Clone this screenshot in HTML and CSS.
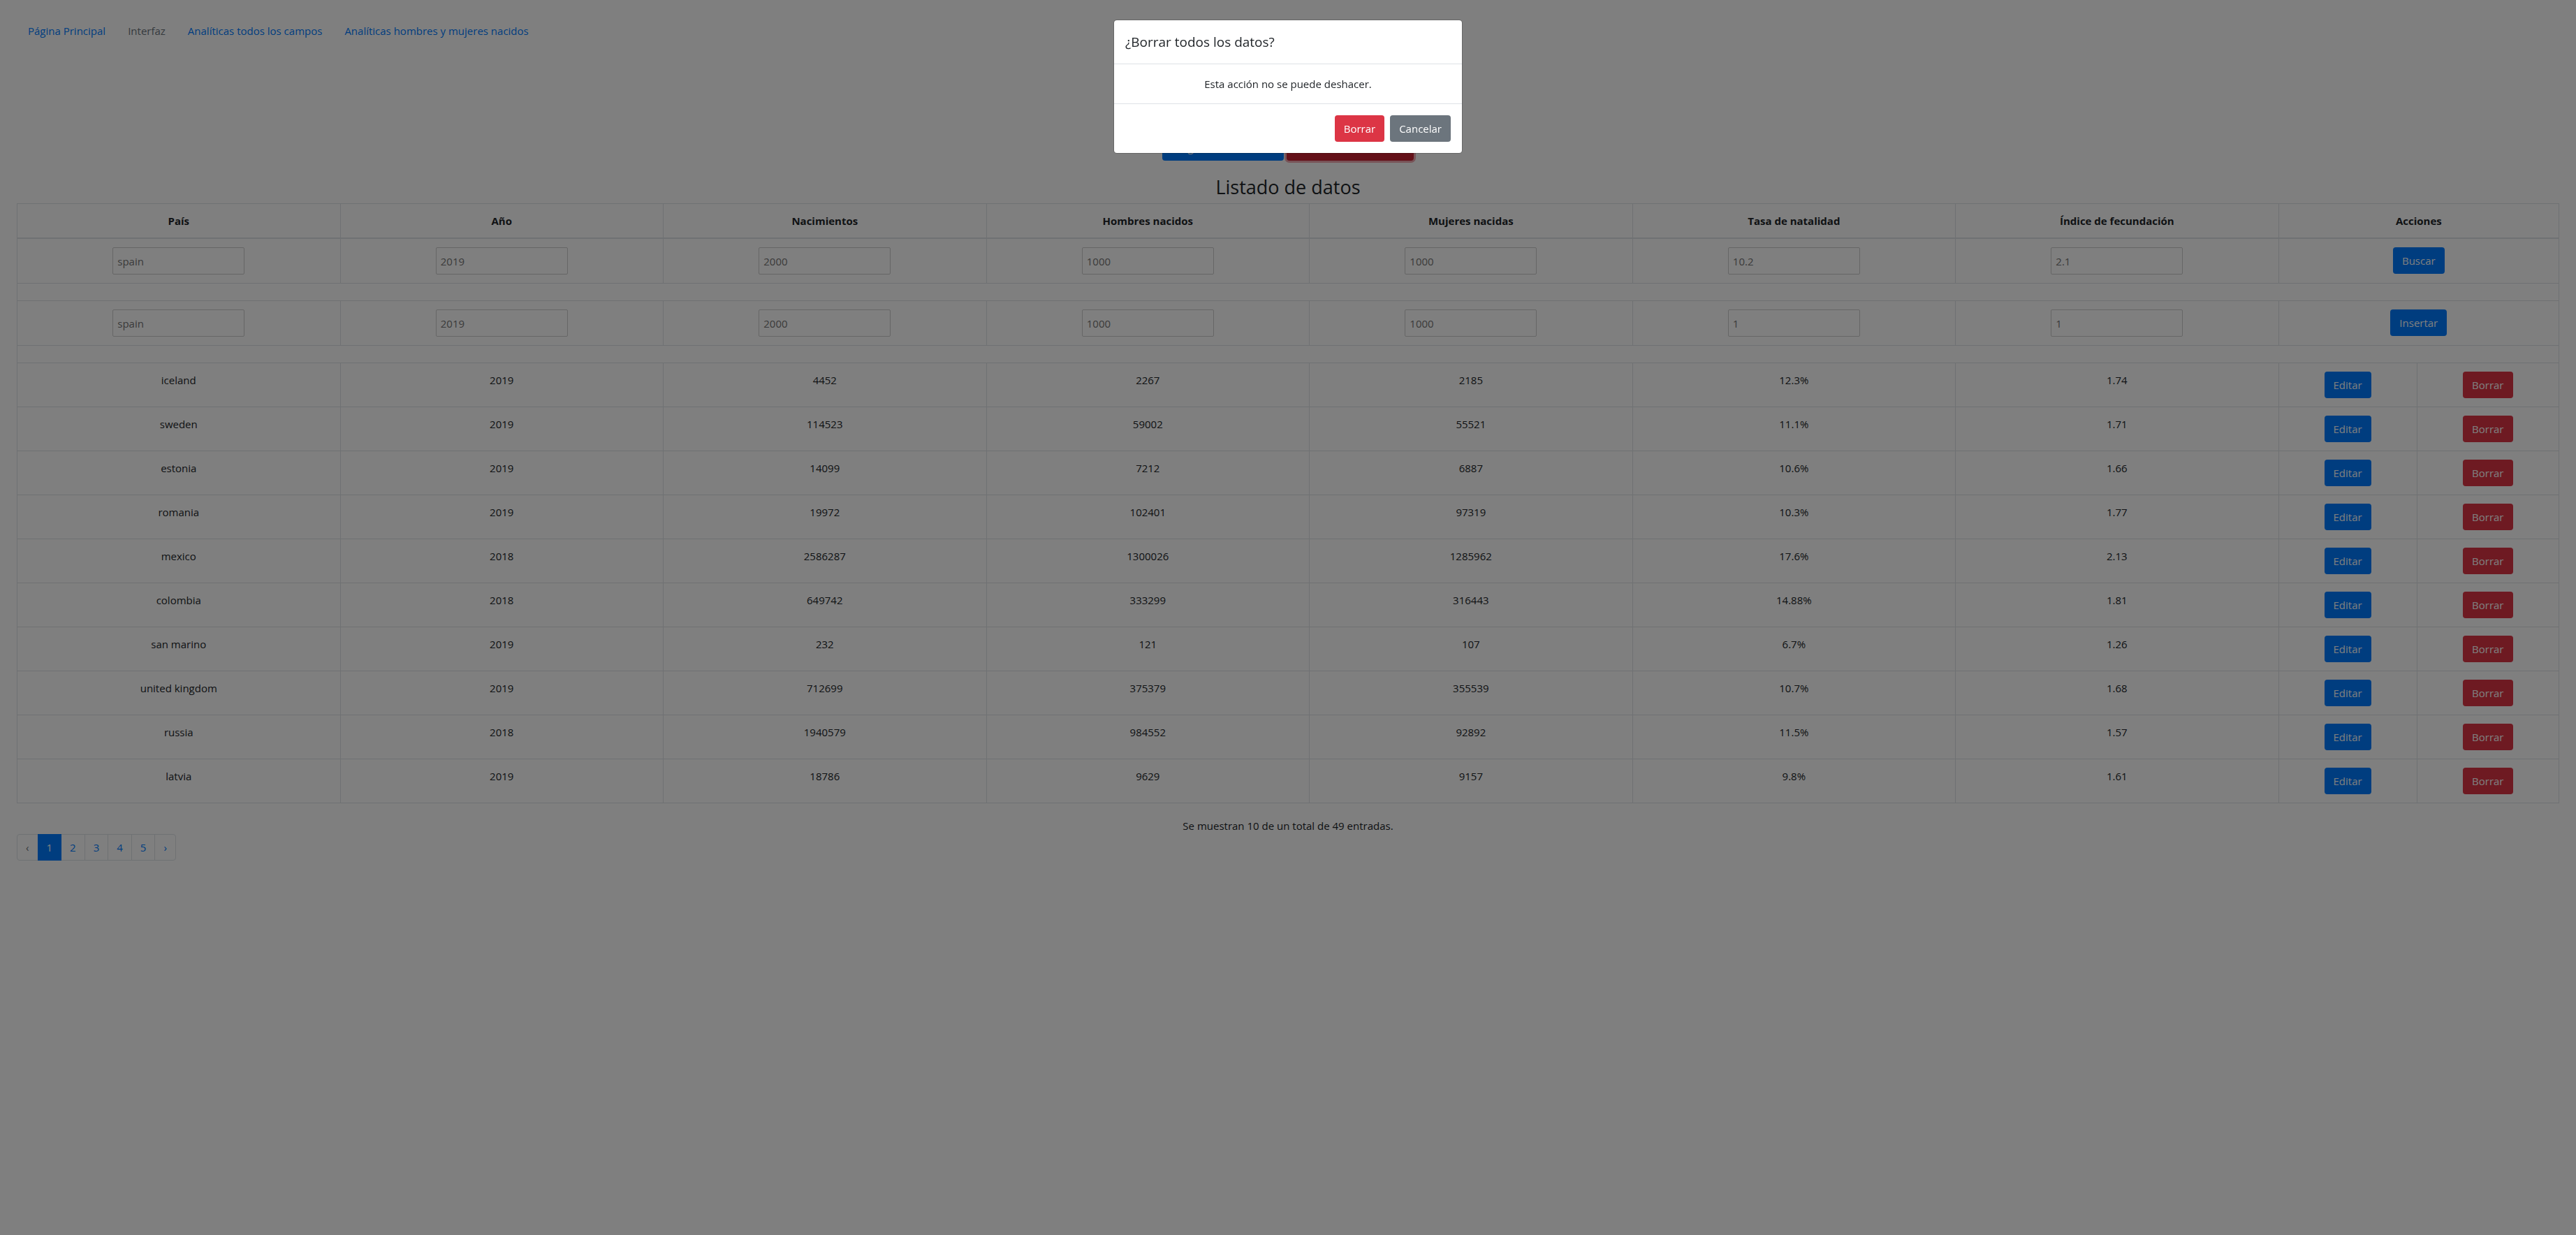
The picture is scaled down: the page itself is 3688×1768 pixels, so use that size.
FILE: index.html
```html
<!DOCTYPE html>
<html lang="es">
<head>
<meta charset="utf-8">
<title>Listado de datos</title>
<link rel="stylesheet" href="styles.css">
</head>
<body>
<main class="page">
  <nav class="nav">
    <a class="nav-link" href="#inicio">Página Principal</a>
    <a class="nav-link disabled" href="#interfaz">Interfaz</a>
    <a class="nav-link" href="#campos">Analíticas todos los campos</a>
    <a class="nav-link" href="#nacidos">Analíticas hombres y mujeres nacidos</a>
  </nav>
  <div class="toolbar">
    <button class="btn primary" type="button">Cargar datos iniciales</button>
    <button class="btn danger pressed" type="button">Borrar todos los datos</button>
  </div>
  <h3 class="heading">Listado de datos</h3>
  <table class="data">
    <colgroup><col class="field" span="7"><col class="edit"><col></colgroup>
    <thead>
      <tr><th>País</th><th>Año</th><th>Nacimientos</th><th>Hombres nacidos</th><th>Mujeres nacidas</th><th>Tasa de natalidad</th><th>Índice de fecundación</th><th colspan="2">Acciones</th></tr>
    </thead>
    <tbody>
      <tr>
        <td><input class="input" aria-label="Buscar país" placeholder="spain"></td>
        <td><input class="input" aria-label="Buscar año" placeholder="2019"></td>
        <td><input class="input" aria-label="Buscar nacimientos" placeholder="2000"></td>
        <td><input class="input" aria-label="Buscar hombres nacidos" placeholder="1000"></td>
        <td><input class="input" aria-label="Buscar mujeres nacidas" placeholder="1000"></td>
        <td><input class="input" aria-label="Buscar tasa de natalidad" placeholder="10.2"></td>
        <td><input class="input" aria-label="Buscar índice de fecundación" placeholder="2.1"></td>
        <td colspan="2"><button class="btn primary" type="button">Buscar</button></td>
      </tr>
      <tr><td class="spacer" colspan="9"></td></tr>
      <tr>
        <td><input class="input" aria-label="País" placeholder="spain"></td>
        <td><input class="input" aria-label="Año" placeholder="2019"></td>
        <td><input class="input" aria-label="Nacimientos" placeholder="2000"></td>
        <td><input class="input" aria-label="Hombres nacidos" placeholder="1000"></td>
        <td><input class="input" aria-label="Mujeres nacidas" placeholder="1000"></td>
        <td><input class="input" aria-label="Tasa de natalidad" placeholder="1"></td>
        <td><input class="input" aria-label="Índice de fecundación" placeholder="1"></td>
        <td colspan="2"><button class="btn primary" type="button">Insertar</button></td>
      </tr>
      <tr><td class="spacer" colspan="9"></td></tr>
      <tr><td>iceland</td><td>2019</td><td>4452</td><td>2267</td><td>2185</td><td>12.3%</td><td>1.74</td><td><button class="btn primary" type="button">Editar</button></td><td><button class="btn danger" type="button">Borrar</button></td></tr>
      <tr><td>sweden</td><td>2019</td><td>114523</td><td>59002</td><td>55521</td><td>11.1%</td><td>1.71</td><td><button class="btn primary" type="button">Editar</button></td><td><button class="btn danger" type="button">Borrar</button></td></tr>
      <tr><td>estonia</td><td>2019</td><td>14099</td><td>7212</td><td>6887</td><td>10.6%</td><td>1.66</td><td><button class="btn primary" type="button">Editar</button></td><td><button class="btn danger" type="button">Borrar</button></td></tr>
      <tr><td>romania</td><td>2019</td><td>19972</td><td>102401</td><td>97319</td><td>10.3%</td><td>1.77</td><td><button class="btn primary" type="button">Editar</button></td><td><button class="btn danger" type="button">Borrar</button></td></tr>
      <tr><td>mexico</td><td>2018</td><td>2586287</td><td>1300026</td><td>1285962</td><td>17.6%</td><td>2.13</td><td><button class="btn primary" type="button">Editar</button></td><td><button class="btn danger" type="button">Borrar</button></td></tr>
      <tr><td>colombia</td><td>2018</td><td>649742</td><td>333299</td><td>316443</td><td>14.88%</td><td>1.81</td><td><button class="btn primary" type="button">Editar</button></td><td><button class="btn danger" type="button">Borrar</button></td></tr>
      <tr><td>san marino</td><td>2019</td><td>232</td><td>121</td><td>107</td><td>6.7%</td><td>1.26</td><td><button class="btn primary" type="button">Editar</button></td><td><button class="btn danger" type="button">Borrar</button></td></tr>
      <tr><td>united kingdom</td><td>2019</td><td>712699</td><td>375379</td><td>355539</td><td>10.7%</td><td>1.68</td><td><button class="btn primary" type="button">Editar</button></td><td><button class="btn danger" type="button">Borrar</button></td></tr>
      <tr><td>russia</td><td>2018</td><td>1940579</td><td>984552</td><td>92892</td><td>11.5%</td><td>1.57</td><td><button class="btn primary" type="button">Editar</button></td><td><button class="btn danger" type="button">Borrar</button></td></tr>
      <tr><td>latvia</td><td>2019</td><td>18786</td><td>9629</td><td>9157</td><td>9.8%</td><td>1.61</td><td><button class="btn primary" type="button">Editar</button></td><td><button class="btn danger" type="button">Borrar</button></td></tr>
    </tbody>
  </table>
  <p class="summary">Se muestran 10 de un total de 49 entradas.</p>
  <nav class="pagination" aria-label="Paginación">
    <a class="page-link muted" href="#anterior">‹</a>
    <a class="page-link active" href="#1">1</a>
    <a class="page-link" href="#2">2</a>
    <a class="page-link" href="#3">3</a>
    <a class="page-link" href="#4">4</a>
    <a class="page-link" href="#5">5</a>
    <a class="page-link" href="#siguiente">›</a>
  </nav>
</main>
<div class="backdrop">
  <div class="modal" role="dialog" aria-labelledby="modal-title">
    <h5 class="modal-title" id="modal-title">¿Borrar todos los datos?</h5>
    <div class="modal-body">Esta acción no se puede deshacer.</div>
    <div class="modal-footer">
      <button class="btn danger" type="button">Borrar</button>
      <button class="btn secondary" type="button">Cancelar</button>
    </div>
  </div>
</div>
</body>
</html>
```
FILE: styles.css
```css
*, *::before, *::after { box-sizing: border-box; }

body {
  margin: 0;
  background: #fff;
  color: #212529;
  font: 15px/24px "Segoe UI", "Open Sans", "Noto Sans", sans-serif;
}

.page { padding: 24px; }

.nav { display: flex; }
.nav-link { padding: 8px 16px; color: #007bff; text-decoration: none; }
.nav-link.disabled { color: #6c757d; }

.toolbar {
  display: flex;
  justify-content: center;
  gap: 4px;
  margin-top: 128px;
}

.btn {
  height: 38px;
  padding: 6px 12px;
  border: 1px solid transparent;
  border-radius: 4px;
  color: #fff;
  font: inherit;
}
.primary { background: #007bff; }
.danger { background: #dc3545; }
.secondary { background: #6c757d; }
.pressed { background: #c82333; box-shadow: 0 0 0 3px rgba(225, 83, 97, .5); }

.heading {
  margin: 21px 0 7px;
  font-size: 27px;
  font-weight: 500;
  line-height: 33px;
  text-align: center;
}

.data {
  width: 100%;
  border-collapse: collapse;
  table-layout: fixed;
  text-align: center;
}
.field { width: 12.71%; }
.edit { width: 5.44%; }
.data th, .data td {
  padding: 12px;
  border: 1px solid #dee2e6;
  vertical-align: top;
}
.data thead th { border-bottom-width: 2px; font-weight: 700; }
.data .btn { display: block; margin: 0 auto; }

.input {
  display: block;
  width: 189px;
  height: 39px;
  margin: 0 auto;
  padding: 6px;
  border: 1px solid #ccc;
  border-radius: 2px;
  background: #fff;
  color: inherit;
  font: inherit;
}
.input::placeholder { color: #757575; opacity: 1; }

.summary { margin: 20px 0 0; text-align: center; }

.pagination { display: flex; }
.page-link {
  margin-left: -1px;
  padding: 6px 12px;
  border: 1px solid #dee2e6;
  color: #007bff;
  text-decoration: none;
}
.page-link:first-child { margin-left: 0; border-radius: 4px 0 0 4px; }
.page-link:last-child { border-radius: 0 4px 4px 0; }
.page-link.muted { color: #6c757d; }
.page-link.active { z-index: 1; border-color: #007bff; background: #007bff; color: #fff; }

.backdrop {
  position: fixed;
  inset: 0;
  z-index: 10;
  padding: 28px;
  background: rgba(0, 0, 0, .5);
}
.modal {
  max-width: 500px;
  margin: 0 auto;
  border: 1px solid rgba(0, 0, 0, .2);
  border-radius: 5px;
  background: #fff;
  background-clip: padding-box;
}
.modal-title {
  margin: 0;
  padding: 16px;
  border-bottom: 1px solid #dee2e6;
  font-size: 19px;
  font-weight: 500;
  line-height: 30px;
}
.modal-body { padding: 16px; text-align: center; }
.modal-footer {
  display: flex;
  justify-content: flex-end;
  gap: 8px;
  padding: 16px;
  border-top: 1px solid #dee2e6;
}
```
